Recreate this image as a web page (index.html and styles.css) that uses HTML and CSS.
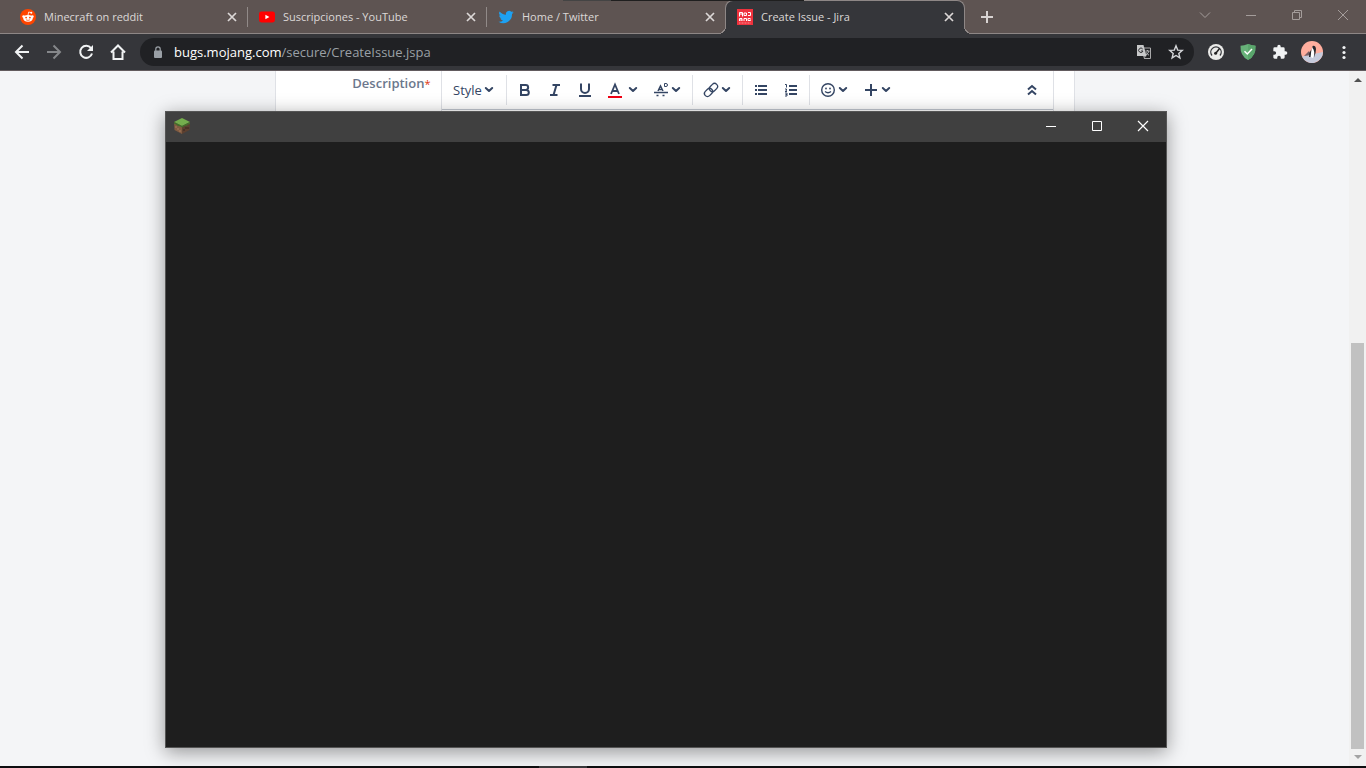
FILE: index.html
```
<!DOCTYPE html>
<html lang="en">
<head>
    <meta charset="UTF-8">
    <meta name="viewport" content="width=device-width, initial-scale=1.0">
    <title>Create Issue - Jira</title>
    <link rel="stylesheet" href="styles.css">
</head>
<body>
    <!-- Shared glyphs -->
    <svg class="defs" aria-hidden="true">
        <symbol id="close" viewBox="0 0 10 10"><path d="M1 1l8 8M9 1l-8 8" stroke="currentColor" stroke-width="1.7"/></symbol>
        <symbol id="chevron" viewBox="0 0 10 10"><path d="M1.800 3L5 6l3.200-3" fill="none" stroke="currentColor" stroke-width="2" stroke-linecap="round" stroke-linejoin="round"/></symbol>
    </svg>

    <header class="tab-strip">
        <div class="behind"></div>
        <div class="tab">
            <svg width="16" height="16" viewBox="0 0 16 16">
                <circle cx="8" cy="8" r="8" fill="#ff4500"/>
                <path d="M8 6.2l.7-3.2 2.4.6" fill="none" stroke="#fff" stroke-width=".8"/>
                <circle cx="11.3" cy="3.7" r="1" fill="#fff"/>
                <circle cx="3.6" cy="7.6" r="1.3" fill="#fff"/>
                <circle cx="12.4" cy="7.6" r="1.3" fill="#fff"/>
                <ellipse cx="8" cy="9.3" rx="4.7" ry="3.4" fill="#fff"/>
                <circle cx="6.1" cy="8.6" r=".9" fill="#ff4500"/>
                <circle cx="9.9" cy="8.6" r=".9" fill="#ff4500"/>
                <path d="M6 10.8q2 1.2 4 0" fill="none" stroke="#ff4500" stroke-width=".7"/>
            </svg>
            <span class="tab-title">Minecraft on reddit</span>
            <button class="tab-close" aria-label="Close tab"><svg width="10" height="10"><use href="#close"/></svg></button>
        </div>
        <div class="tab">
            <svg width="16" height="16" viewBox="0 0 16 16">
                <rect y="2.5" width="16" height="11" rx="2.4" fill="#f00"/>
                <path d="M6.4 5.7v4.6L10.4 8z" fill="#fff"/>
            </svg>
            <span class="tab-title">Suscripciones - YouTube</span>
            <button class="tab-close" aria-label="Close tab"><svg width="10" height="10"><use href="#close"/></svg></button>
        </div>
        <div class="tab last">
            <svg width="16" height="16" viewBox="0 0 24 24">
                <path fill="#1da1f2" d="M23.4 4.9c-.8.4-1.7.6-2.6.8.9-.6 1.7-1.5 2-2.5-.9.5-1.9.9-2.9 1.1a4.6 4.6 0 0 0-7.9 4.2C8.100 8.300 4.700 6.400 2.400 3.600a4.600 4.600 0 0 0 1.400 6.200c-.8 0-1.500-.2-2.100-.6 0 2.300 1.600 4.200 3.700 4.700-.7.2-1.400.2-2.100.1.600 1.800 2.300 3.200 4.300 3.200A9.300 9.300 0 0 1 .8 19.100a13.100 13.100 0 0 0 20.200-11.700c.9-.7 1.700-1.500 2.400-2.500z"/>
            </svg>
            <span class="tab-title">Home / Twitter</span>
            <button class="tab-close" aria-label="Close tab"><svg width="10" height="10"><use href="#close"/></svg></button>
        </div>
        <div class="tab active">
            <svg width="16" height="16" viewBox="0 0 16 16">
                <rect width="16" height="16" fill="#ef323d"/>
                <path d="M2.500 7.500V3.500h3v4M4 4v2M7 4h2.500v2.500H7zM11 3.500h2.500V6.500H11M2.500 12V9.500H5V12M2.500 11H5M7 12V9.500h2.500V12M13.500 9.500H11v2h2.500v-1" fill="none" stroke="#fff" stroke-width="1"/>
                <path d="M2 14h12" stroke="#f9a7ab" stroke-width=".8" stroke-dasharray="1 .5"/>
            </svg>
            <span class="tab-title">Create Issue - Jira</span>
            <button class="tab-close" aria-label="Close tab"><svg width="10" height="10"><use href="#close"/></svg></button>
        </div>
        <button class="new-tab" aria-label="New tab"><svg width="12" height="12" viewBox="0 0 12 12"><path d="M6 0v12M0 6h12" stroke="#d8d3d2" stroke-width="2"/></svg></button>
        <div class="window-controls">
            <button aria-label="Search tabs"><svg width="12" height="12" viewBox="0 0 12 12"><path d="M1 3.500l5 5 5-5" fill="none" stroke="currentColor"/></svg></button>
            <button aria-label="Minimize"><svg width="12" height="12" viewBox="0 0 12 12"><path d="M1 6.500h10" stroke="currentColor"/></svg></button>
            <button aria-label="Restore"><svg width="12" height="12" viewBox="0 0 12 12"><path d="M1.500 3.500h7v7h-7zM3.500 3.500v-2h7v7h-2" fill="none" stroke="currentColor"/></svg></button>
            <button aria-label="Close"><svg width="12" height="12" viewBox="0 0 12 12"><path d="M1 1l10 10M11 1L1 11" stroke="currentColor"/></svg></button>
        </div>
    </header>

    <nav class="browser-bar">
        <button aria-label="Back"><svg width="16" height="16" viewBox="0 0 16 16"><path d="M15 8H2M8.500 1.500L2 8l6.500 6.500" fill="none" stroke="#f1f3f4" stroke-width="2"/></svg></button>
        <button aria-label="Forward"><svg width="16" height="16" viewBox="0 0 16 16"><path d="M1 8h13M7.500 1.500L14 8l-6.500 6.500" fill="none" stroke="#85878a" stroke-width="2"/></svg></button>
        <button aria-label="Reload"><svg width="16" height="16" viewBox="0 0 16 16"><path d="M13 4.200A6 6 0 1 0 14 9.500" fill="none" stroke="#f1f3f4" stroke-width="2"/><path d="M15 1v6H9z" fill="#f1f3f4"/></svg></button>
        <button aria-label="Home"><svg width="16" height="16" viewBox="0 0 16 16"><path d="M1 8.500L8 1.500l7 7M3.500 7.500V15h9V7.500" fill="none" stroke="#f1f3f4" stroke-width="2"/></svg></button>
        <div class="address">
            <svg width="12" height="12" viewBox="0 0 12 12"><rect x="2" y="4.500" width="8" height="7.500" rx="1" fill="#9aa0a6"/><path d="M3.800 5V3a2.200 2.200 0 0 1 4.400 0v2" fill="none" stroke="#9aa0a6" stroke-width="1.200"/></svg>
            <a class="url" href="#">bugs.mojang.com<span>/secure/CreateIssue.jspa</span></a>
            <button aria-label="Translate"><svg width="16" height="16" viewBox="0 0 16 16"><path d="M7 4h7.500v10.500H8" fill="none" stroke="#a9a9aa"/><path d="M1 1h6.500l3 11H1z" fill="#c8c9ca"/><path d="M6.700 5A2.200 2.200 0 1 0 7 7H5" fill="none" stroke="#303134"/><path d="M9.500 7h4M11.500 6v1M13 7q-.8 2.500-3 4M10 8.200q1 2 3 3" fill="none" stroke="#b4b5b6"/><path d="M8 14.500l2.500-2.500H7z" fill="#8e8f90"/></svg></button>
            <button aria-label="Bookmark"><svg width="16" height="16" viewBox="0 0 16 16"><path d="M8 1.800l1.700 4.300 4.600.3-3.500 3 1.100 4.500L8 11.500l-3.900 2.400 1.100-4.500-3.500-3 4.600-.3z" fill="none" stroke="#d5d7da" stroke-width="1.400"/></svg></button>
        </div>
        <div class="extensions">
            <button aria-label="Performance"><svg width="16" height="16" viewBox="0 0 16 16"><circle cx="8" cy="8" r="8" fill="#ebebe9"/><path d="M4 11.500A5.200 5.200 0 1 1 12 11.500" fill="none" stroke="#333539" stroke-width="1.300"/><path d="M11.500 4.500L8 9" stroke="#222" stroke-width="1.500"/><circle cx="7.600" cy="9.300" r="1.500" fill="#222"/></svg></button>
            <button aria-label="Ad blocker"><svg width="16" height="16" viewBox="0 0 16 16"><path d="M8 0q4 1.500 7.500 1.700Q16 12 8 16 0 12 .5 1.700 4 1.500 8 0z" fill="#67b279"/><path d="M8 0q4 1.500 7.500 1.700Q16 12 8 16z" fill="#5aa66c"/><path d="M4.500 7.200L7.300 10 12 5" fill="none" stroke="#fff" stroke-width="1.500"/></svg></button>
            <button aria-label="Extensions"><svg width="16" height="16" viewBox="0 0 24 24"><path fill="#f1f3f4" d="M20.500 11H19V7a2 2 0 0 0-2-2h-4V3.500a2.500 2.500 0 0 0-5 0V5H4a2 2 0 0 0-2 2v3.800h1.500a2.700 2.700 0 0 1 0 5.400H2V20c0 1.100.9 2 2 2h3.800v-1.500a2.700 2.700 0 0 1 5.400 0V22H17a2 2 0 0 0 2-2v-4h1.500a2.500 2.500 0 0 0 0-5z"/></svg></button>
            <button aria-label="Profile"><svg width="22" height="22" viewBox="0 0 22 22"><circle cx="11" cy="11" r="11" fill="#ffae9e"/><path d="M1 15.500L22 11a11 11 0 0 1-21 4.500z" fill="#c5cadb"/><path d="M3 15l5-5 2 4z" fill="#765f66"/><path d="M9.500 16q0-8 3-10.500 2.500 1 1.500 5T12 17z" fill="#fff"/><path d="M11.500 5q3-1 3.500 3 0 4-2 8.500 1-7-1.500-9.500zM10.500 8q-3 4-2.500 8h1.500z" fill="#26262b"/></svg></button>
            <button aria-label="Menu"><svg width="16" height="16" viewBox="0 0 16 16" fill="#f1f3f4"><circle cx="8" cy="3.500" r="1.600"/><circle cx="8" cy="8.500" r="1.600"/><circle cx="8" cy="13.500" r="1.600"/></svg></button>
        </div>
    </nav>

    <div class="viewport">
        <main class="page">
            <form class="issue-form">
                <label class="field-label" for="style">Description<span>*</span></label>
                <div class="editor">
                    <div class="editor-bar">
                        <div class="group style-group">
                            <button type="button" id="style">Style<svg width="10" height="10"><use href="#chevron"/></svg></button>
                        </div>
                        <div class="group">
                            <button type="button" aria-label="Bold"><svg width="16" height="16" viewBox="0 0 16 16"><path d="M4 3h4.700a2.400 2.400 0 0 1 0 4.900H4zM4 7.900h5.200a2.600 2.600 0 0 1 0 5.200H4z" fill="none" stroke="currentColor" stroke-width="2"/></svg></button>
                            <button type="button" aria-label="Italic"><svg width="16" height="16" viewBox="0 0 16 16"><path d="M5.500 3H13M3 13h7.500M9.500 3l-3 10" fill="none" stroke="currentColor" stroke-width="2"/></svg></button>
                            <button type="button" aria-label="Underline"><svg width="16" height="16" viewBox="0 0 16 16"><path d="M4 1.500V7a4 4 0 0 0 8 0V1.500M2 14h12" fill="none" stroke="currentColor" stroke-width="2"/></svg></button>
                            <button type="button" class="dropdown color" aria-label="Text color"><svg width="16" height="16" viewBox="0 0 16 16"><path d="M4 12L8 2.500l4 9.500M5.300 9h5.400" fill="none" stroke="currentColor" stroke-width="1.800"/><path d="M1 15h14" stroke="#f00014" stroke-width="2"/></svg><svg width="10" height="10"><use href="#chevron"/></svg></button>
                            <button type="button" class="dropdown" aria-label="More formatting"><svg width="16" height="16" viewBox="0 0 16 16"><path d="M5 9l2.500-5L10 9M6 7.500h3" fill="none" stroke="currentColor" stroke-width="1.500"/><path d="M1 10.500h14M3.500 13.500h2M9.500 13.500h2" fill="none" stroke="currentColor" stroke-width="1.300"/><path d="M11.500 1.500h1.500a1.500 1.500 0 0 1 0 3h-1.500z" fill="none" stroke="currentColor"/></svg><svg width="10" height="10"><use href="#chevron"/></svg></button>
                        </div>
                        <div class="group">
                            <button type="button" class="dropdown" aria-label="Link"><svg width="16" height="16" viewBox="0 0 16 16"><g transform="rotate(-45 8 8)" fill="none" stroke="currentColor" stroke-width="1.300"><rect x="0" y="5" width="9" height="6" rx="3"/><rect x="7" y="5" width="9" height="6" rx="3"/></g></svg><svg width="10" height="10"><use href="#chevron"/></svg></button>
                        </div>
                        <div class="group">
                            <button type="button" aria-label="Bullet list"><svg width="16" height="16" viewBox="0 0 16 16"><path d="M5 4h9M5 8h9M5 12h9M2 4h2M2 8h2M2 12h2" stroke="currentColor" stroke-width="2"/><path d="M4.500 2v12" stroke="#fff"/></svg></button>
                            <button type="button" aria-label="Numbered list"><svg width="16" height="16" viewBox="0 0 16 16"><path d="M6 4h8M6 8h8M6 12h8" stroke="currentColor" stroke-width="2"/><path d="M2 2.500h1.500v3M2 7h1.500v1.500L2 9.500h2M2 11h2v3H2M2.500 12.500H4" fill="none" stroke="currentColor"/></svg></button>
                        </div>
                        <div class="group plain">
                            <button type="button" class="dropdown" aria-label="Emoji"><svg width="16" height="16" viewBox="0 0 16 16"><circle cx="8" cy="8" r="6.300" fill="none" stroke="currentColor" stroke-width="1.400"/><circle cx="6" cy="6.500" r=".9" fill="currentColor"/><circle cx="10" cy="6.500" r=".9" fill="currentColor"/><path d="M5 9.500q3 2.500 6 0" fill="none" stroke="currentColor" stroke-width="1.300"/></svg><svg width="10" height="10"><use href="#chevron"/></svg></button>
                            <button type="button" class="dropdown" aria-label="Insert"><svg width="16" height="16" viewBox="0 0 16 16"><path d="M8 2v12M2 8h12" stroke="currentColor" stroke-width="2"/></svg><svg width="10" height="10"><use href="#chevron"/></svg></button>
                        </div>
                        <button type="button" class="collapse" aria-label="Collapse toolbar"><svg width="16" height="16" viewBox="0 0 16 16"><path d="M4 7.500L8 4l4 3.500M4 12.500L8 9l4 3.500" fill="none" stroke="currentColor" stroke-width="2"/></svg></button>
                    </div>
                </div>
            </form>
        </main>
        <div class="scrollbar">
            <div class="arrow up"></div>
            <div class="thumb"></div>
            <div class="arrow down"></div>
        </div>
    </div>

    <div class="taskbar"><div class="task"></div></div>

    <!-- Floating game window -->
    <section class="game-window">
        <div class="title-bar">
            <svg width="16" height="16" viewBox="0 0 16 16">
                <path d="M0 4l8 4v8l-7.500-4z" fill="#805b41"/>
                <path d="M16 4L8 8v8l7.500-4z" fill="#5c4030"/>
                <path d="M8 0l8 4-8 4-8-4z" fill="#74ad4d"/>
                <path d="M0 4l8 4 8-4v2l-2 .5-1 1-2 .3L8 9.500l-2-1.300-2-.3-2-1.400L0 5.500z" fill="#426e2b"/>
                <path d="M2 8v2M4 10v2M6 12v2" stroke="#a17657" stroke-width="1.200"/>
                <path d="M10 11v2M12 9v2M14 9v2" stroke="#3e2b23" stroke-width="1.200"/>
            </svg>
            <div class="window-controls">
                <button aria-label="Minimize"><svg width="12" height="12" viewBox="0 0 12 12"><path d="M1 6.500h10" stroke="currentColor"/></svg></button>
                <button aria-label="Maximize"><svg width="12" height="12" viewBox="0 0 12 12"><path d="M1.500 1.500h9v9h-9z" fill="none" stroke="currentColor"/></svg></button>
                <button aria-label="Close"><svg width="12" height="12" viewBox="0 0 12 12"><path d="M1 1l10 10M11 1L1 11" stroke="currentColor" stroke-width="1.200"/></svg></button>
            </div>
        </div>
    </section>
</body>
</html>
```
FILE: styles.css
```
* {
    box-sizing: border-box;
}

body {
    font-family: "Open Sans", "Noto Sans", sans-serif;
    margin: 0;
    height: 100vh;
    display: flex;
    flex-direction: column;
    overflow: hidden;
    position: relative;
    background-color: #f4f5f7;
}

button {
    display: flex;
    align-items: center;
    justify-content: center;
    padding: 0;
    border: 0;
    background: none;
    color: inherit;
    font: inherit;
}

svg {
    display: block;
    flex: none;
}

.defs {
    position: absolute;
    width: 0;
    height: 0;
}

/* Tabs */
.tab-strip {
    position: relative;
    display: flex;
    height: 34px;
    flex: none;
    padding-left: 8px;
    background-color: #5e5452;
    border-bottom: 1px solid #8e8786;
    color: #dcd8d7;
}

.behind {
    position: absolute;
    top: 0;
    left: 563px;
    width: 241px;
    height: 1px;
    background: linear-gradient(to right, #444 20%, #1f1f1f 20%);
    z-index: 2;
}

.tab {
    position: relative;
    display: flex;
    align-items: center;
    flex: 0 1 239px;
    min-width: 0;
    height: 33px;
    padding: 0 9px 0 12px;
    gap: 8px;
    font-size: 11px;
}

.tab::after {
    content: '';
    position: absolute;
    right: -1px;
    top: 7px;
    width: 1px;
    height: 20px;
    background-color: #918a88;
}

.tab.last::after {
    display: none;
}

.tab-title {
    flex: 1;
    white-space: nowrap;
    overflow: hidden;
}

.tab-close {
    width: 12px;
    height: 16px;
}

.tab.active {
    flex-basis: 240px;
    height: 34px;
    padding: 0 9px 2px 11px;
    background-color: #35363a;
    border: solid #8e8786;
    border-width: 1px 1px 0;
    border-radius: 8px 8px 0 0;
}

/* curved feet on both sides of the open tab */
.tab.active::before,
.tab.active::after {
    content: '';
    position: absolute;
    top: auto;
    bottom: 0;
    width: 8px;
    height: 8px;
}

.tab.active::before {
    left: -8px;
    background: radial-gradient(circle at 0 0, #5e5452 7px, #8e8786 7px, #8e8786 8px, #35363a 8px);
}

.tab.active::after {
    right: -8px;
    background: radial-gradient(circle at 100% 0, #5e5452 7px, #8e8786 7px, #8e8786 8px, #35363a 8px);
}

.new-tab {
    width: 44px;
}

.window-controls {
    display: flex;
    margin-left: auto;
}

.window-controls button {
    width: 46px;
    height: 29px;
}

.tab-strip .window-controls {
    color: #a49d9b;
}

/* Navigation bar */
.browser-bar {
    display: flex;
    align-items: center;
    flex: none;
    height: 37px;
    padding-left: 6px;
    background-color: #35363a;
    border-bottom: 1px solid #625b5e;
}

.browser-bar button {
    width: 32px;
    height: 28px;
}

.address {
    display: flex;
    align-items: center;
    flex: 1;
    height: 28px;
    margin-left: 6px;
    padding: 0 2px 0 12px;
    border-radius: 14px;
    background-color: #202124;
}

.url {
    flex: 1;
    margin-left: 10px;
    color: #fff;
    font-size: 13px;
    text-decoration: none;
}

.url span {
    color: #9aa0a6;
}

.extensions {
    display: flex;
    padding: 0 6px;
}

/* Page */
.viewport {
    display: flex;
    flex: 1;
    min-height: 0;
}

.page {
    flex: 1;
    display: flex;
    justify-content: center;
}

.issue-form {
    display: flex;
    width: 800px;
    margin-bottom: 60px;
    background-color: #fff;
    border: solid #dfe1e6;
    border-width: 0 1px;
}

.field-label {
    width: 165px;
    padding: 2px 10px 0 0;
    text-align: right;
    font-size: 13px;
    line-height: 20px;
    font-weight: 600;
    color: #6b778c;
}

.field-label span {
    color: #de350b;
    font-weight: 400;
    font-size: 11px;
}

.editor {
    flex: 1;
    margin-right: 20px;
    border: solid #dfe1e6;
    border-width: 0 1px;
}

.editor-bar {
    display: flex;
    align-items: center;
    height: 39px;
    padding-bottom: 1px;
    border-bottom: 1px solid #c1c7d0;
    color: #344563;
}

.group {
    display: flex;
    padding: 0 3px;
    border-right: 1px solid #dfe1e6;
}

.group.plain {
    border-right: 0;
}

.editor-bar button {
    width: 30px;
    height: 30px;
}

.style-group {
    padding: 0 11px;
    font-size: 13px;
}

.editor-bar .style-group button {
    width: 42px;
    gap: 2px;
}

.editor-bar .dropdown {
    width: 43px;
    justify-content: flex-start;
    padding-left: 7px;
    gap: 2px;
}

.editor-bar .color {
    width: 46px;
    gap: 5px;
}

.editor-bar .collapse {
    margin-left: auto;
    margin-right: 6px;
}

.scrollbar {
    display: flex;
    flex-direction: column;
    align-items: center;
    width: 17px;
    padding: 7px 0;
    background-color: #f1f1f1;
}

.arrow {
    border: 4px solid transparent;
}

.arrow.up {
    border-top: 0;
    border-bottom-color: #505050;
}

.arrow.down {
    margin-top: 6px;
    border-bottom: 0;
    border-top-color: #a3a3a3;
}

.thumb {
    width: 13px;
    height: 406px;
    margin-top: auto;
    background-color: #c1c1c1;
}

.taskbar {
    flex: none;
    height: 2px;
    padding-left: 539px;
    background-color: #0e0e10;
}

.task {
    width: 48px;
    height: 2px;
    background-color: #3a3a3c;
}

/* Game window */
.game-window {
    position: absolute;
    top: 111px;
    right: 199px;
    bottom: 20px;
    left: 165px;
    background-color: #1e1e1e;
    border: 1px solid #555;
    box-shadow: 0 4px 18px rgba(0, 0, 0, 0.4);
}

.title-bar {
    display: flex;
    align-items: center;
    height: 30px;
    padding: 0 0 2px 8px;
    background-color: #404040;
    color: #fff;
}

.title-bar .window-controls button {
    height: 28px;
}
```
